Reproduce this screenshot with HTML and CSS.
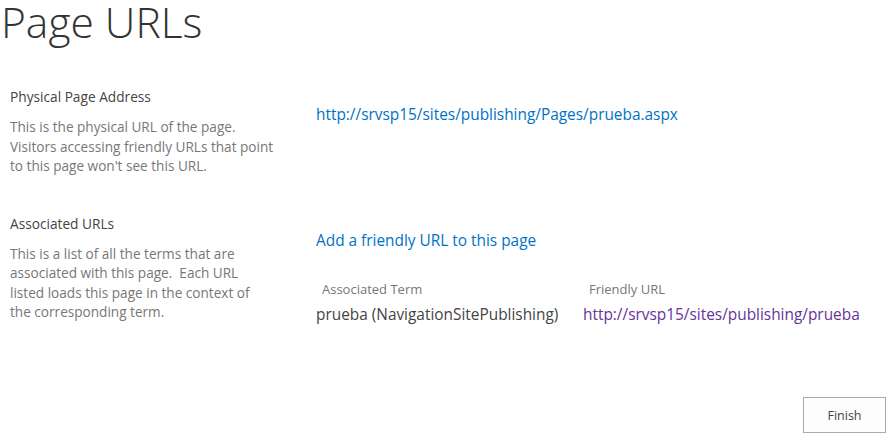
FILE: index.html
```html
<!DOCTYPE html>
<html>
<head>
<meta charset="utf-8">
<link rel="stylesheet" href="styles.css">
</head>
<body>
<div class="page">
  <h1 class="title">Page URLs</h1>
  <div class="section first">
    <div class="label">
      <div class="label-head">Physical Page Address</div>
      <div class="label-desc">This is the physical URL of the page. Visitors accessing friendly URLs that point to this page won't see this URL.</div>
    </div>
    <div class="field">
      <a class="link phys" href="#">http://srvsp15/sites/publishing/Pages/prueba.aspx</a>
    </div>
  </div>
  <div class="section second">
    <div class="label">
      <div class="label-head">Associated URLs</div>
      <div class="label-desc narrow">This is a list of all the terms that are associated with this page.&nbsp; Each URL listed loads this page in the context of the corresponding term.</div>
    </div>
    <div class="field">
      <a class="link add" href="#">Add a friendly URL to this page</a>
      <div class="table">
        <div class="th term-col">Associated Term</div>
        <div class="th url-col">Friendly URL</div>
        <div class="td term-col">prueba (NavigationSitePublishing)</div>
        <div class="td url-col"><a class="visited" href="#">http://srvsp15/sites/publishing/prueba</a></div>
      </div>
    </div>
  </div>
  <div class="actions">
    <button class="btn">Finish</button>
  </div>
</div>
</body>
</html>
```
FILE: styles.css
```css
html, body {
  margin: 0;
  padding: 0;
  background: #fff;
}
body {
  font-family: "Open Sans", "Noto Sans", sans-serif;
  color: #444;
}
.page {
  width: 894px;
  height: 439px;
  position: relative;
}
.title {
  margin: 0;
  padding: 0 0 0 1px;
  font-size: 42.5px;
  font-weight: 300;
  line-height: 44px;
  color: #333;
}
.section {
  display: flex;
}
.section.first {
  margin-top: 44px;
}
.section.second {
  margin-top: 39px;
}
.label {
  width: 290px;
  padding-left: 10px;
  flex: none;
}
.label-head {
  font-size: 13.7px;
  line-height: 18px;
  color: #444;
}
.label-desc {
  margin-top: 11px;
  font-size: 13.6px;
  line-height: 19.5px;
  color: #777;
  width: 270px;
}
.label-desc.narrow {
  width: 256px;
}
.field {
  padding-left: 16px;
  display: flex;
  flex-direction: column;
  align-items: flex-start;
}
.link {
  color: #0072c6;
  text-decoration: none;
  font-size: 15.4px;
  line-height: 20px;
}
.phys {
  margin-top: 17px;
}
.add {
  margin-top: 16px;
}
.table {
  display: grid;
  grid-template-columns: 267px auto;
  margin-top: 28px;
}
.th {
  font-size: 13px;
  color: #777;
  line-height: 20px;
  padding-left: 6px;
}
.td {
  font-size: 15.4px;
  line-height: 24px;
  margin-top: 4px;
  color: #444;
}
.visited {
  color: #663399;
  text-decoration: none;
}
.actions {
  position: absolute;
  left: 803px;
  top: 397px;
}
.btn {
  width: 83px;
  height: 36px;
  border: 1px solid #ababab;
  background: #fdfdfd;
  font-family: "Open Sans", "Noto Sans", sans-serif;
  font-size: 12.5px;
  color: #444;
  padding: 0;
}
```
